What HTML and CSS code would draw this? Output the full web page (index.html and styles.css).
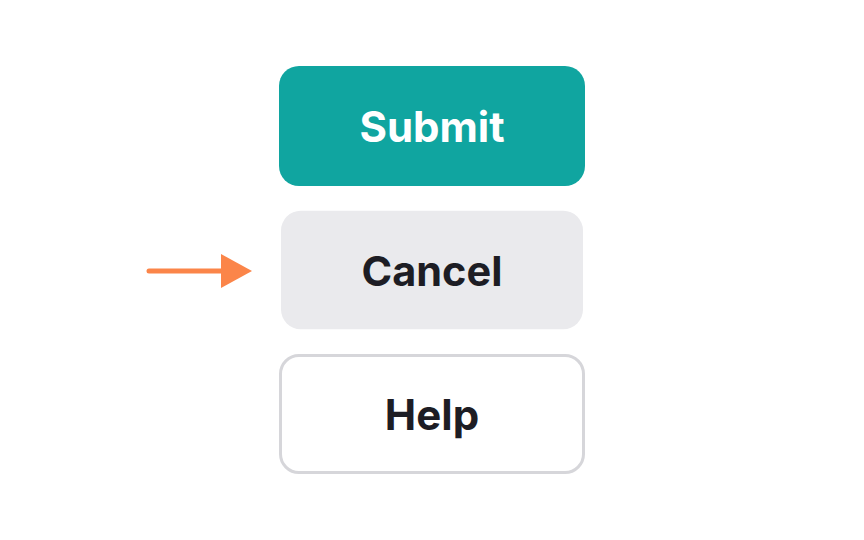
FILE: index.html
```html
<!DOCTYPE html>
<html lang="en">
<head>
<meta charset="utf-8">
<title>Buttons</title>
<link rel="stylesheet" href="styles.css">
</head>
<body>
<main class="stage">
  <div class="stack">
    <button class="btn btn-primary" type="button">Submit</button>
    <div class="pointed">
      <svg class="arrow" width="110" height="40" viewBox="0 0 110 40" aria-hidden="true">
        <line x1="3" y1="19" x2="80" y2="19" stroke="#fb8549" stroke-width="5" stroke-linecap="round"/>
        <polygon points="75,2 106,19 75,36" fill="#fb8549"/>
      </svg>
      <button class="btn btn-secondary" type="button">Cancel</button>
    </div>
    <button class="btn btn-outline" type="button">Help</button>
  </div>
</main>
</body>
</html>
```

FILE: styles.css
```css
html, body {
  margin: 0;
  padding: 0;
  background: #ffffff;
}

.stage {
  width: 864px;
  height: 540px;
  display: flex;
  align-items: center;
  justify-content: center;
}

.stack {
  display: flex;
  flex-direction: column;
  gap: 24px;
}

.btn {
  width: 306px;
  height: 120px;
  border-radius: 20px;
  border: none;
  font-family: Inter, "Liberation Sans", sans-serif;
  font-weight: 700;
  font-size: 42px;
  letter-spacing: 0;
  display: flex;
  align-items: center;
  justify-content: center;
  padding: 0;
  cursor: pointer;
}

.btn-primary {
  background: #10a5a0;
  color: #ffffff;
}

.pointed {
  position: relative;
}

.btn-secondary {
  background: #eaeaed;
  color: #1d1d24;
  transform: scale(0.987);
}

.btn-outline {
  background: #ffffff;
  color: #1d1d24;
  border: 3px solid #d6d6da;
}

.arrow {
  position: absolute;
  left: -133px;
  top: 42px;
}
```
